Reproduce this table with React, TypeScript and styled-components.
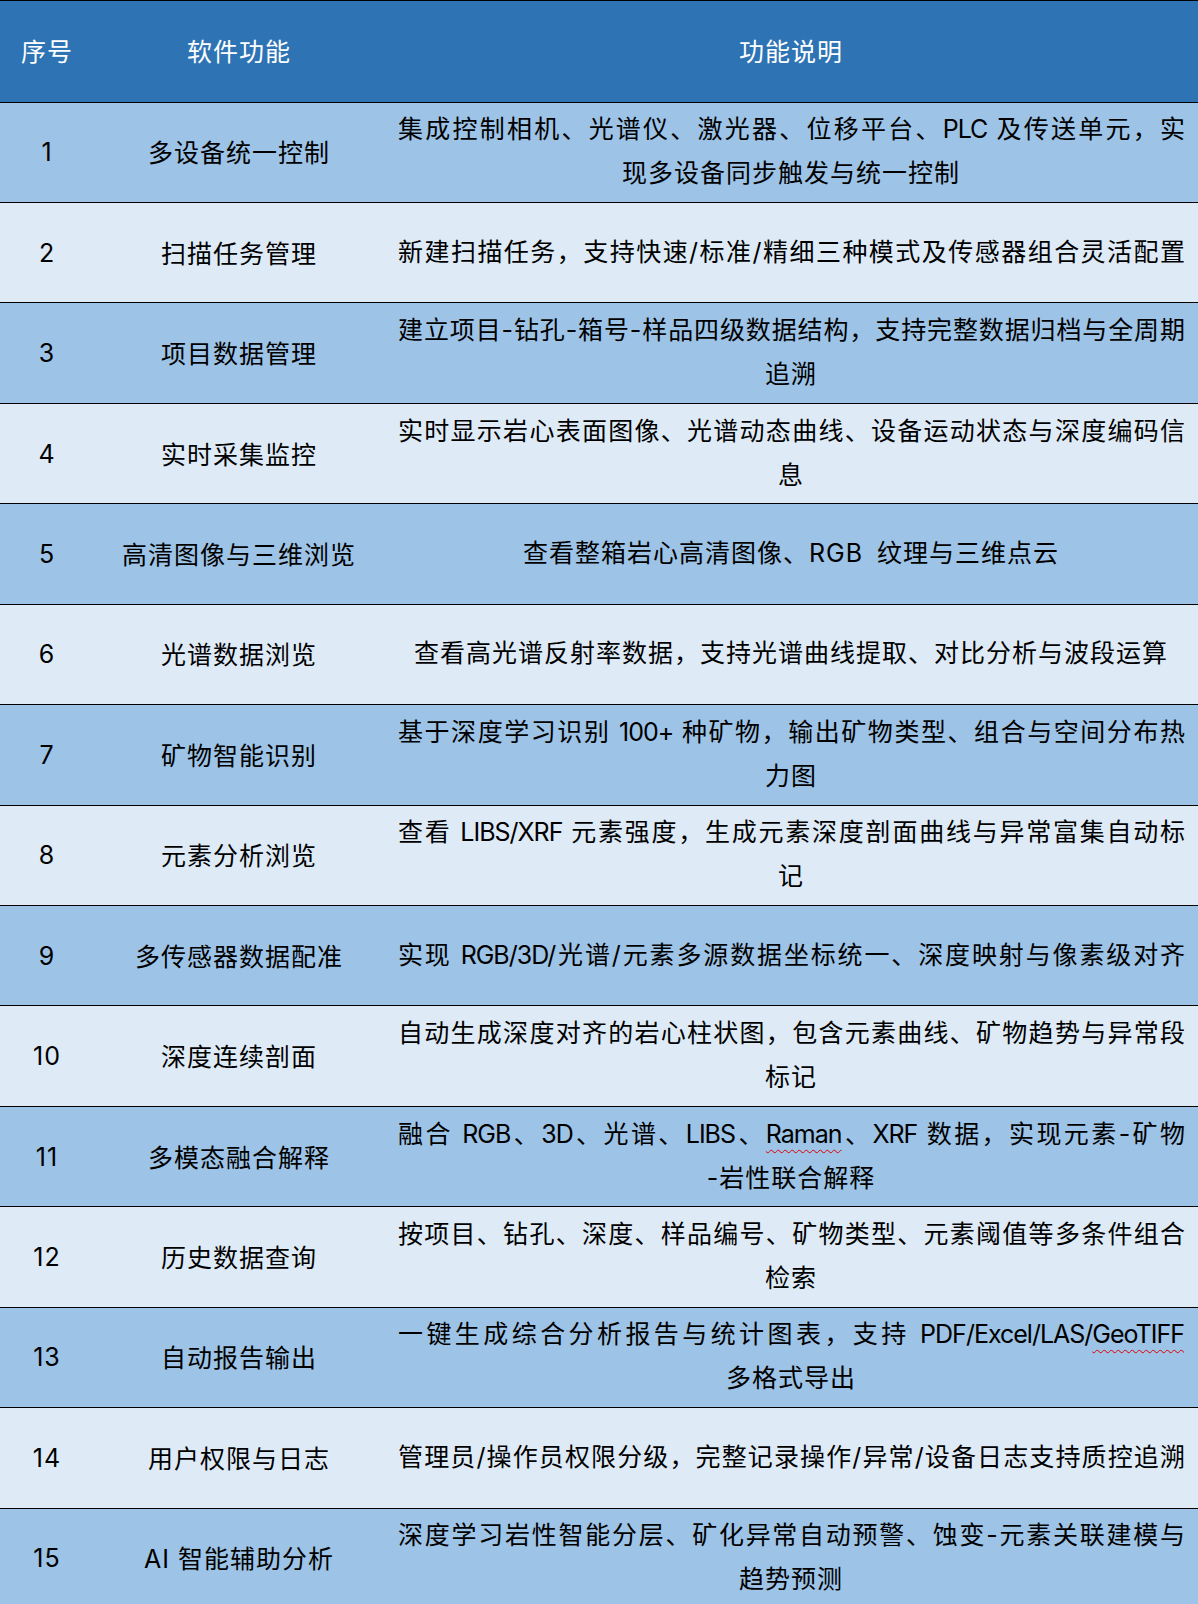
import React, { ReactNode } from "react";
import { createGlobalStyle, styled } from "styled-components";

const GlobalStyle = createGlobalStyle`
  html, body {
    margin: 0;
    padding: 0;
    background: #ffffff;
  }
  body {
    font-family: Inter, "Noto Sans CJK SC", "Noto Sans", sans-serif;
    color: #000;
  }
`;

type Tone = "head" | "dark" | "light";

const tones: Record<Tone, string> = {
  head: "#2e74b5",
  dark: "#9dc3e6",
  light: "#deebf7",
};

const Table = styled.div`
  width: 1198px;
  display: flex;
  flex-direction: column;
`;

const Row = styled.div<{ $tone: Tone }>`
  display: grid;
  grid-template-columns: 94px 290px 1fr;
  box-sizing: border-box;
  height: ${(p) => (p.$tone === "head" ? "101.5px" : "100.45px")};
  padding-bottom: 2px;
  border-top: 1px solid #000;
  background: ${(p) => tones[p.$tone]};
  color: ${(p) => (p.$tone === "head" ? "#fff" : "#000")};
  font-size: 25px;
`;

const Cell = styled.div<{ $num?: boolean }>`
  display: flex;
  align-items: center;
  justify-content: center;
  text-align: center;
  white-space: nowrap;
  letter-spacing: 1px;
  padding-top: ${(p) => (p.$num ? "2px" : "0")};
`;

const DescCell = styled.div`
  display: flex;
  flex-direction: column;
  justify-content: center;
  padding: 0 14px;
  box-sizing: border-box;
  min-width: 0;
`;

const Line = styled.div<{ $fill?: boolean }>`
  line-height: 44px;
  text-align: ${(p) => (p.$fill ? "justify" : "center")};
  text-align-last: ${(p) => (p.$fill ? "justify" : "center")};
  letter-spacing: ${(p) => (p.$fill ? "-1px" : "1px")};
  word-spacing: ${(p) => (p.$fill ? "0" : "6px")};
`;

const Squiggle = styled.span`
  text-decoration: underline wavy #e00000;
  text-decoration-thickness: 1px;
  text-underline-offset: 6px;
`;

type Item = {
  no: number;
  name: string;
  lines: ReactNode[];
  fill?: boolean;
};

const items: Item[] = [
  {
    no: 1,
    name: "多设备统一控制",
    lines: ["集成控制相机、光谱仪、激光器、位移平台、PLC 及传送单元，实", "现多设备同步触发与统一控制"],
  },
  {
    no: 2,
    name: "扫描任务管理",
    lines: ["新建扫描任务，支持快速/标准/精细三种模式及传感器组合灵活配置"],
    fill: true,
  },
  {
    no: 3,
    name: "项目数据管理",
    lines: ["建立项目-钻孔-箱号-样品四级数据结构，支持完整数据归档与全周期", "追溯"],
  },
  {
    no: 4,
    name: "实时采集监控",
    lines: ["实时显示岩心表面图像、光谱动态曲线、设备运动状态与深度编码信", "息"],
  },
  {
    no: 5,
    name: "高清图像与三维浏览",
    lines: ["查看整箱岩心高清图像、RGB 纹理与三维点云"],
  },
  {
    no: 6,
    name: "光谱数据浏览",
    lines: ["查看高光谱反射率数据，支持光谱曲线提取、对比分析与波段运算"],
  },
  {
    no: 7,
    name: "矿物智能识别",
    lines: ["基于深度学习识别 100+ 种矿物，输出矿物类型、组合与空间分布热", "力图"],
  },
  {
    no: 8,
    name: "元素分析浏览",
    lines: ["查看 LIBS/XRF 元素强度，生成元素深度剖面曲线与异常富集自动标", "记"],
  },
  {
    no: 9,
    name: "多传感器数据配准",
    lines: ["实现 RGB/3D/光谱/元素多源数据坐标统一、深度映射与像素级对齐"],
    fill: true,
  },
  {
    no: 10,
    name: "深度连续剖面",
    lines: ["自动生成深度对齐的岩心柱状图，包含元素曲线、矿物趋势与异常段", "标记"],
  },
  {
    no: 11,
    name: "多模态融合解释",
    lines: [
      <>
        融合 RGB、3D、光谱、LIBS、<Squiggle>Raman</Squiggle>、XRF 数据，实现元素-矿物
      </>,
      "-岩性联合解释",
    ],
  },
  {
    no: 12,
    name: "历史数据查询",
    lines: ["按项目、钻孔、深度、样品编号、矿物类型、元素阈值等多条件组合", "检索"],
  },
  {
    no: 13,
    name: "自动报告输出",
    lines: [
      <>
        一键生成综合分析报告与统计图表，支持 PDF/Excel/LAS/<Squiggle>GeoTIFF</Squiggle>
      </>,
      "多格式导出",
    ],
  },
  {
    no: 14,
    name: "用户权限与日志",
    lines: ["管理员/操作员权限分级，完整记录操作/异常/设备日志支持质控追溯"],
    fill: true,
  },
  {
    no: 15,
    name: "AI 智能辅助分析",
    lines: ["深度学习岩性智能分层、矿化异常自动预警、蚀变-元素关联建模与", "趋势预测"],
  },
];

export default function App() {
  return (
    <>
      <GlobalStyle />
      <Table>
        <Row $tone="head">
          <Cell>序号</Cell>
          <Cell>软件功能</Cell>
          <Cell>功能说明</Cell>
        </Row>
        {items.map((item) => (
          <Row key={item.no} $tone={item.no % 2 === 1 ? "dark" : "light"}>
            <Cell $num>{item.no}</Cell>
            <Cell>{item.name}</Cell>
            <DescCell>
              {item.lines.map((line, i) => (
                <Line
                  key={i}
                  $fill={item.lines.length > 1 ? i === 0 : item.fill}
                >
                  {line}
                </Line>
              ))}
            </DescCell>
          </Row>
        ))}
      </Table>
    </>
  );
}
